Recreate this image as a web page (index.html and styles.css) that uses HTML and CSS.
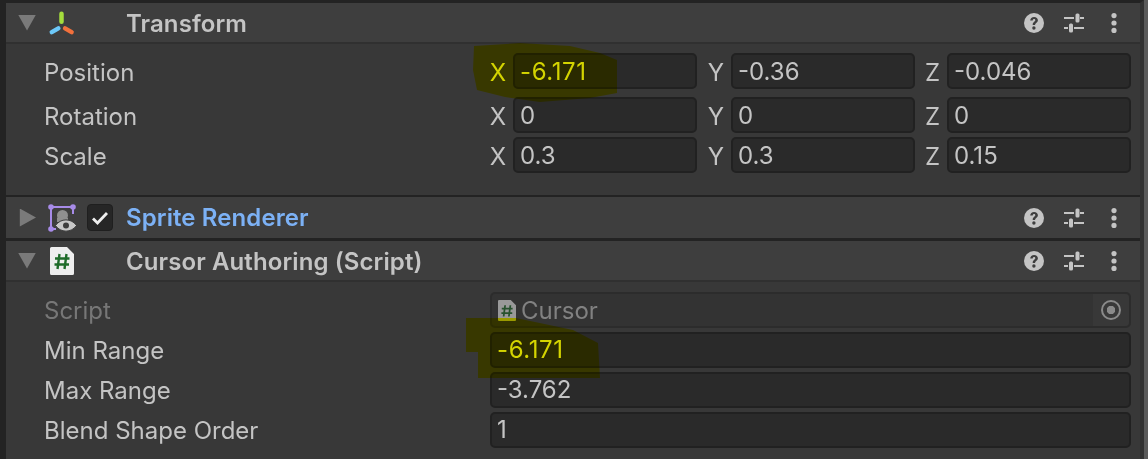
FILE: index.html
```html
<!DOCTYPE html>
<html lang="en">

<head>
    <meta charset="UTF-8">
    <title>Inspector</title>
    <link rel="stylesheet" href="styles.css">
</head>

<body>
    <svg class="defs" width="0" height="0">
        <symbol id="icon-help" viewBox="0 0 20 20">
            <circle cx="10" cy="10" r="10" fill="#c4c4c4" />
            <path d="M6.200 7.600c0-2.300 1.700-3.700 3.900-3.700s3.800 1.300 3.800 3.300c0 2.600-2.800 2.600-2.800 4.800H8.700c0-3.300 2.600-3.300 2.600-4.700 0-.8-.5-1.200-1.200-1.200-.8 0-1.300.5-1.400 1.500z" fill="#3e3e3e" />
            <circle cx="9.900" cy="15" r="1.700" fill="#3e3e3e" />
        </symbol>
        <symbol id="icon-sliders" viewBox="0 0 20 20">
            <path d="M0 5h10M16 5h4M0 15h4M10 15h10" stroke="#c4c4c4" stroke-width="2" fill="none" />
            <rect x="11.500" y="0.500" width="4" height="9" rx="1.500" fill="#c4c4c4" />
            <rect x="5" y="10.500" width="4" height="9" rx="1.500" fill="#c4c4c4" />
        </symbol>
        <symbol id="icon-more" viewBox="0 0 6 20">
            <circle cx="3" cy="2.600" r="2.600" fill="#c4c4c4" />
            <circle cx="3" cy="10" r="2.600" fill="#c4c4c4" />
            <circle cx="3" cy="17.400" r="2.600" fill="#c4c4c4" />
        </symbol>
        <symbol id="icon-script" viewBox="0 0 24 28">
            <path d="M1.500 0H17l7 7v19.500a1.500 1.500 0 0 1-1.500 1.500h-21A1.500 1.500 0 0 1 0 26.500V1.500A1.500 1.500 0 0 1 1.500 0z" fill="#eeeeee" />
            <path d="M9.500 7 7.500 22M16.500 7l-2 15M5 11.500h14.500M4.500 17.500H19" stroke="#1f6b2a" stroke-width="2.400" fill="none" />
        </symbol>
    </svg>

    <div class="inspector">
        <section class="component">
            <header class="comp-header">
                <span class="arrow arrow-down"></span>
                <svg class="comp-icon" viewBox="-1 -2.300 28 28">
                    <path d="M12.500 2.500v8" stroke="#a4dc3c" stroke-width="4.500" stroke-linecap="round" />
                    <path d="M2.800 20.800l6.500-3.700" stroke="#6cc8f8" stroke-width="4.500" stroke-linecap="round" />
                    <path d="M22.600 20.800l-6.500-3.700" stroke="#f2703c" stroke-width="4.500" stroke-linecap="round" />
                </svg>
                <span class="comp-check-gap"></span>
                <h2 class="comp-title">Transform</h2>
                <div class="comp-tools">
                    <svg class="tool-help"><use href="#icon-help" /></svg>
                    <svg class="tool-sliders"><use href="#icon-sliders" /></svg>
                    <svg class="tool-more"><use href="#icon-more" /></svg>
                </div>
            </header>
            <div class="comp-body comp-body-transform">
                <div class="row">
                    <span class="row-label">Position</span>
                    <div class="vec3">
                        <span class="axis axis-hot">X</span><span class="field field-hot">-6.171</span>
                        <span class="axis">Y</span><span class="field">-0.36</span>
                        <span class="axis">Z</span><span class="field">-0.046</span>
                    </div>
                </div>
                <div class="row row-rotation">
                    <span class="row-label">Rotation</span>
                    <div class="vec3">
                        <span class="axis">X</span><span class="field">0</span>
                        <span class="axis">Y</span><span class="field">0</span>
                        <span class="axis">Z</span><span class="field">0</span>
                    </div>
                </div>
                <div class="row">
                    <span class="row-label">Scale</span>
                    <div class="vec3">
                        <span class="axis">X</span><span class="field">0.3</span>
                        <span class="axis">Y</span><span class="field">0.3</span>
                        <span class="axis">Z</span><span class="field">0.15</span>
                    </div>
                </div>
            </div>
        </section>

        <section class="component">
            <header class="comp-header comp-header-closed">
                <span class="arrow arrow-right"></span>
                <svg class="comp-icon" viewBox="0 0 28 28">
                    <path d="M3 3h22v7M3 3v22h5" stroke="#a78be8" stroke-width="2" fill="none" />
                    <circle cx="3" cy="3" r="2.800" fill="#a78be8" />
                    <circle cx="25" cy="3" r="2.800" fill="#a78be8" />
                    <circle cx="3" cy="25" r="2.800" fill="#a78be8" />
                    <circle cx="14.500" cy="11.500" r="5.500" fill="#8f8f8f" />
                    <path d="M9 14h11v4H9z" fill="#8f8f8f" />
                    <path d="M7.500 21.500c5-7.500 16-7.500 21 0-5 7.500-16 7.500-21 0z" fill="#c8c8c8" stroke="#3e3e3e" stroke-width="1" />
                    <circle cx="18" cy="21.500" r="3" fill="#3e3e3e" />
                </svg>
                <span class="comp-check"><svg viewBox="0 0 16 14"><path d="M1 7.500l4.500 4.500L15 2" stroke="#eeeeee" stroke-width="2.800" fill="none" /></svg></span>
                <h2 class="comp-title comp-title-link">Sprite Renderer</h2>
                <div class="comp-tools">
                    <svg class="tool-help"><use href="#icon-help" /></svg>
                    <svg class="tool-sliders"><use href="#icon-sliders" /></svg>
                    <svg class="tool-more"><use href="#icon-more" /></svg>
                </div>
            </header>
        </section>

        <section class="component">
            <header class="comp-header">
                <span class="arrow arrow-down"></span>
                <svg class="comp-icon comp-icon-script"><use href="#icon-script" /></svg>
                <span class="comp-check-gap"></span>
                <h2 class="comp-title">Cursor Authoring (Script)</h2>
                <div class="comp-tools">
                    <svg class="tool-help"><use href="#icon-help" /></svg>
                    <svg class="tool-sliders"><use href="#icon-sliders" /></svg>
                    <svg class="tool-more"><use href="#icon-more" /></svg>
                </div>
            </header>
            <div class="comp-body comp-body-script">
                <div class="row row-muted">
                    <span class="row-label">Script</span>
                    <div class="object-field">
                        <svg class="object-icon"><use href="#icon-script" /></svg>
                        <span class="object-name">Cursor</span>
                        <span class="object-pick"><span class="pick-ring"></span></span>
                    </div>
                </div>
                <div class="row row-wide">
                    <span class="row-label">Min Range</span>
                    <span class="field field-hot">-6.171</span>
                </div>
                <div class="row row-wide">
                    <span class="row-label">Max Range</span>
                    <span class="field">-3.762</span>
                </div>
                <div class="row row-wide">
                    <span class="row-label">Blend Shape Order</span>
                    <span class="field">1</span>
                </div>
            </div>
        </section>
    </div>

    <!-- marker scribbles drawn on top of the screenshot -->
    <svg class="marker" viewBox="0 0 1148 459">
        <path d="M474 46 520 43 570 46 600 53 617 60V93L590 98 540 102 505 97 477 90 473 70z" />
        <path d="M466 318H516L573 330 598 343 600 378H478V352H466z" />
    </svg>
</body>

</html>
```

FILE: styles.css
```css
* {
    padding: 0;
    margin: 0;
    box-sizing: border-box;
}

body {
    position: relative;
    width: 1148px;
    height: 459px;
    overflow: hidden;
    background-color: #5a5a5a;
    font-family: Inter, "Liberation Sans", sans-serif;
    font-size: 24px;
    color: #c4c4c4;
}

.defs {
    position: absolute;
}

.inspector {
    height: 459px;
    margin-right: 4px;
    border-top: 3px solid #232323;
    border-left: 6px solid #232323;
    border-right: 4px solid #323232;
    background-color: #383838;
}

/* component header */
.comp-header {
    display: flex;
    align-items: center;
    height: 41px;
    padding-left: 12px;
    background-color: #3e3e3e;
    border-bottom: 2px solid #303030;
}

.comp-header-closed {
    height: 44px;
    border-bottom: 3px solid #232323;
}

.arrow {
    width: 18px;
    height: 16px;
    margin-right: 12px;
    background-color: #7a7a7a;
}

.arrow-down {
    clip-path: polygon(0 0, 100% 0, 50% 100%);
}

.arrow-right {
    clip-path: polygon(10% 0, 100% 50%, 10% 100%);
    height: 18px;
}

.comp-icon {
    width: 28px;
    height: 28px;
    flex: none;
}

.comp-icon-script {
    width: 24px;
    height: 28px;
    margin: 0 2px;
}

.comp-check-gap {
    width: 51px;
    flex: none;
}

.comp-check {
    display: flex;
    align-items: center;
    justify-content: center;
    flex: none;
    width: 26px;
    height: 27px;
    margin: 0 14px 0 11px;
    background-color: #262626;
    border: 1px solid #1f1f1f;
    border-radius: 4px;
}

.comp-check svg {
    width: 16px;
    height: 14px;
}

.comp-title {
    flex: 1;
    padding-top: 2px;
    margin-left: -1px;
    font-size: 24px;
    font-weight: 600;
    letter-spacing: 0.1px;
    color: #c4c4c4;
}

.comp-title-link {
    padding-top: 0;
    color: #7cb1f5;
}

.comp-tools {
    display: flex;
    align-items: center;
    width: 116px;
}

.tool-help {
    width: 20px;
    height: 20px;
    margin-right: 20px;
}

.tool-sliders {
    width: 20px;
    height: 20px;
    margin-right: 27px;
}

.tool-more {
    width: 6px;
    height: 20px;
}

/* rows */
.comp-body {
    padding-top: 9px;
}

.comp-body-transform {
    height: 153px;
    border-bottom: 2px solid #232323;
}

.comp-body-script {
    padding-top: 10px;
}

.row {
    display: flex;
    align-items: center;
    height: 36px;
    margin-bottom: 4px;
    padding-left: 38px;
    padding-right: 9px;
}

.row-rotation {
    margin-top: 8px;
}

.row-label {
    flex: none;
    width: 446px;
}

.comp-body-transform .row-label,
.comp-body-transform .axis {
    padding-top: 2px;
}

.comp-body-transform .field {
    line-height: 33px;
}

.row-muted {
    color: #777777;
}

.row-wide .field {
    flex: 1;
}

.vec3 {
    display: grid;
    grid-template-columns: 23px 184px 34px 184px 32px 184px;
    flex: 1;
    align-items: center;
    height: 36px;
}

.axis {
    justify-self: end;
    margin-right: 7px;
}

.axis-hot,
.field-hot {
    color: #d4d400;
}

.field {
    display: block;
    height: 36px;
    padding-left: 5px;
    line-height: 31px;
    background-color: #2a2a2a;
    border: 2px solid #212121;
    border-radius: 5px;
    white-space: nowrap;
}

.field-hot {
    letter-spacing: 0.6px;
}

/* object reference field */
.object-field {
    display: flex;
    align-items: center;
    flex: 1;
    height: 36px;
    padding-left: 6px;
    background-color: #333333;
    border: 2px solid #2c2c2c;
    border-radius: 5px;
}

.object-icon {
    width: 18px;
    height: 21px;
    margin-right: 5px;
    opacity: 0.55;
}

.object-name {
    flex: 1;
    color: #818181;
}

.object-pick {
    display: flex;
    align-items: center;
    justify-content: center;
    width: 36px;
    height: 32px;
    background-color: #383838;
    border-radius: 0 4px 4px 0;
}

.pick-ring {
    width: 20px;
    height: 20px;
    border: 2px solid #8a8a8a;
    border-radius: 50%;
    background: radial-gradient(circle, #8a8a8a 0 4px, transparent 4.500px);
}

/* highlighter scribble */
.marker {
    position: absolute;
    left: 0;
    top: 0;
    width: 1148px;
    height: 459px;
    fill: #ffff00;
    mix-blend-mode: multiply;
    pointer-events: none;
}
```
